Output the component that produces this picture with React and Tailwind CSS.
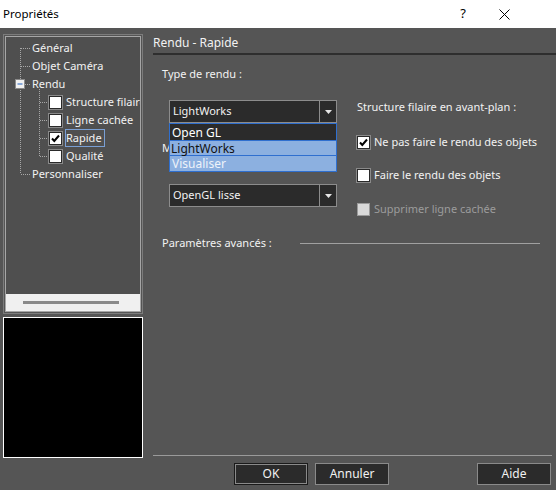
import React from 'react'

const font = { fontFamily: '"Noto Sans", "Liberation Sans", sans-serif' }

function Check({ checked, disabled }) {
    return (
        <span
            className={
                'relative inline-flex items-center justify-center w-[13px] h-[13px] shrink-0 border ' +
                (disabled ? 'bg-[#d9d9d9] border-[#9a9a9a]' : 'bg-white border-[#2a2a2a] shadow-[0_0_0_1px_#8a8a8a]')
            }
        >
            {checked && (
                <svg width="9" height="9" viewBox="0 0 9 9">
                    <path d="M1 4.5 L3.3 7 L8 1.5" fill="none" stroke="#000" strokeWidth="2" />
                </svg>
            )}
        </span>
    )
}

function Combo({ value, children }) {
    return (
        <div className="relative ml-[7px] flex h-[23px] w-[168px]">
            <div className="flex flex-1 items-center border border-[#8c8c8c] bg-[#2b2b2b] pl-[3px] text-[#f2f2f2]">
                {value}
            </div>
            <div className="flex w-[17px] items-center justify-center border border-l-0 border-[#8c8c8c] bg-[#2b2b2b]">
                <svg width="7" height="4" viewBox="0 0 7 4">
                    <path d="M0 0 H7 L3.5 4 Z" fill="#e6e6e6" />
                </svg>
            </div>
            {children}
        </div>
    )
}

function TreeRow({ indent, box, checked, focused, children }) {
    return (
        <div className={'flex h-[18px] items-center ' + (indent ? 'pl-[43px]' : 'pl-[25px]')}>
            {box && <Check checked={checked} />}
            <span
                className={
                    'leading-[16px] ' +
                    (box ? 'ml-[3px] ' : '') +
                    (focused ? 'border border-[#7a9fd4] pr-[2px]' : 'border border-transparent')
                }
            >
                {children}
            </span>
        </div>
    )
}

function Btn({ label, primary }) {
    return (
        <button
            className={
                'h-[22px] w-[74px] bg-[#2b2b2b] text-[#f2f2f2] ' +
                (primary
                    ? 'border border-[#1a1a1a] shadow-[inset_0_0_0_1px_#8a8a8a]'
                    : 'border border-[#8a8a8a]')
            }
        >
            {label}
        </button>
    )
}

export default function App() {
    return (
        <div className="flex h-[490px] w-[556px] flex-col overflow-hidden bg-[#555555] text-[11px] text-[#f2f2f2]" style={font}>
            {/* title bar */}
            <div className="flex h-[28px] shrink-0 items-center bg-white pl-[3px] text-[11.5px] text-black">
                <span>Propriétés</span>
                <span className="ml-auto mr-[33px] text-[13px]">?</span>
                <svg className="mr-[46px]" width="11" height="11" viewBox="0 0 11 11">
                    <path d="M0.5 0.5 L10.5 10.5 M10.5 0.5 L0.5 10.5" stroke="#000" strokeWidth="1" />
                </svg>
            </div>

            <div className="flex flex-1">
                {/* left column */}
                <div className="flex w-[143px] shrink-0 flex-col pl-[3px] pt-[6px]">
                    <div className="flex h-[280px] flex-col border border-[#7c7c7c] p-[1px]">
                        <div className="flex flex-1 flex-col border border-[#a6a6a6] bg-[#4f4f4f]">
                            <div className="relative flex-1 pt-[2px] whitespace-nowrap overflow-hidden">
                                <svg className="absolute left-0 top-0" width="140" height="200">
                                    <g stroke="#a8a8a8" strokeDasharray="1 1" fill="none">
                                        <path d="M14.5 11 V137" />
                                        <path d="M15 11.5 H24 M15 29.5 H24 M19 47.5 H24 M15 137.5 H24" />
                                        <path d="M33.5 52 V119" />
                                        <path d="M34 65.5 H43 M34 83.5 H43 M34 101.5 H43 M34 119.5 H43" />
                                    </g>
                                    <rect x="9.5" y="42.5" width="9" height="9" fill="#f0f0f0" stroke="#8a8a8a" />
                                    <path d="M11.5 47 H16.5" stroke="#2060c0" strokeWidth="1" />
                                </svg>
                                <TreeRow>Général</TreeRow>
                                <TreeRow>Objet Caméra</TreeRow>
                                <TreeRow>Rendu</TreeRow>
                                <TreeRow indent box>Structure filaire</TreeRow>
                                <TreeRow indent box>Ligne cachée</TreeRow>
                                <TreeRow indent box checked focused>Rapide</TreeRow>
                                <TreeRow indent box>Qualité</TreeRow>
                                <TreeRow>Personnaliser</TreeRow>
                            </div>
                            <div className="flex h-[17px] items-center bg-[#f0f0f0] pl-[17px]">
                                <div className="h-[3px] w-[96px] bg-[#8a8a8a]" />
                            </div>
                        </div>
                    </div>
                    <div className="mt-[3px] h-[141px] border border-white bg-black" />
                </div>

                {/* right panel */}
                <div className="ml-[10px] flex flex-1 flex-col">
                    <div className="pt-[7px] text-[12px] leading-[16px]">Rendu - Rapide</div>
                    <div className="mt-[2px] h-[2px] bg-[#2e2e2e]" />

                    <div className="flex pl-[9px] pt-[11px]">
                        <div className="flex w-[175px] flex-col">
                            <div className="leading-[16px]">Type de rendu :</div>
                            <div className="mt-[18px]">
                                <Combo value="LightWorks">
                                    <div className="absolute left-0 top-[23px] z-10 w-[168px] border border-[#2f6fcf] bg-[#2b2b2b] leading-[15px]">
                                        <div className="h-[17px] border-b border-[#2f6fcf] pl-[2px] pt-[1px] text-[12px] text-white">Open GL</div>
                                        <div className="h-[15px] border-b border-[#2f6fcf] bg-[#8cb0e0] pl-[1px] text-[12px] text-[#111]">LightWorks</div>
                                        <div className="h-[15px] bg-[#8cb0e0] pl-[2px] text-[12px] text-[#eef3fa]">Visualiser</div>
                                    </div>
                                </Combo>
                            </div>
                            <div className="mt-[17px] leading-[16px]">Mode de rendu :</div>
                            <div className="mt-[28px]">
                                <Combo value="OpenGL lisse" />
                            </div>
                        </div>

                        <div className="ml-[20px] flex flex-col pt-[33px]">
                            <div className="leading-[16px]">Structure filaire en avant-plan :</div>
                            <div className="mt-[19px] flex items-center gap-[4px] leading-[16px]">
                                <Check checked />
                                <span>Ne pas faire le rendu des objets</span>
                            </div>
                            <div className="mt-[17px] flex items-center gap-[4px] leading-[16px]">
                                <Check />
                                <span>Faire le rendu des objets</span>
                            </div>
                            <div className="mt-[18px] flex items-center gap-[4px] leading-[16px] text-[#9c9c9c]">
                                <Check disabled />
                                <span>Supprimer ligne cachée</span>
                            </div>
                        </div>
                    </div>

                    <div className="mt-[18px] flex items-center pl-[9px] pr-[16px] leading-[16px]">
                        <span>Paramètres avancés :</span>
                        <div className="ml-[28px] h-[1px] flex-1 bg-[#a0a0a0]" />
                    </div>

                    <div className="mt-auto mr-[4px] h-[1px] bg-[#9a9a9a]" />
                    <div className="mb-[5px] mt-[7px] flex text-[12px]">
                        <div className="ml-[81px] flex gap-[7px]">
                            <Btn label="OK" primary />
                            <Btn label="Annuler" />
                        </div>
                        <div className="ml-auto mr-[5px]">
                            <Btn label="Aide" />
                        </div>
                    </div>
                </div>
            </div>
        </div>
    )
}
